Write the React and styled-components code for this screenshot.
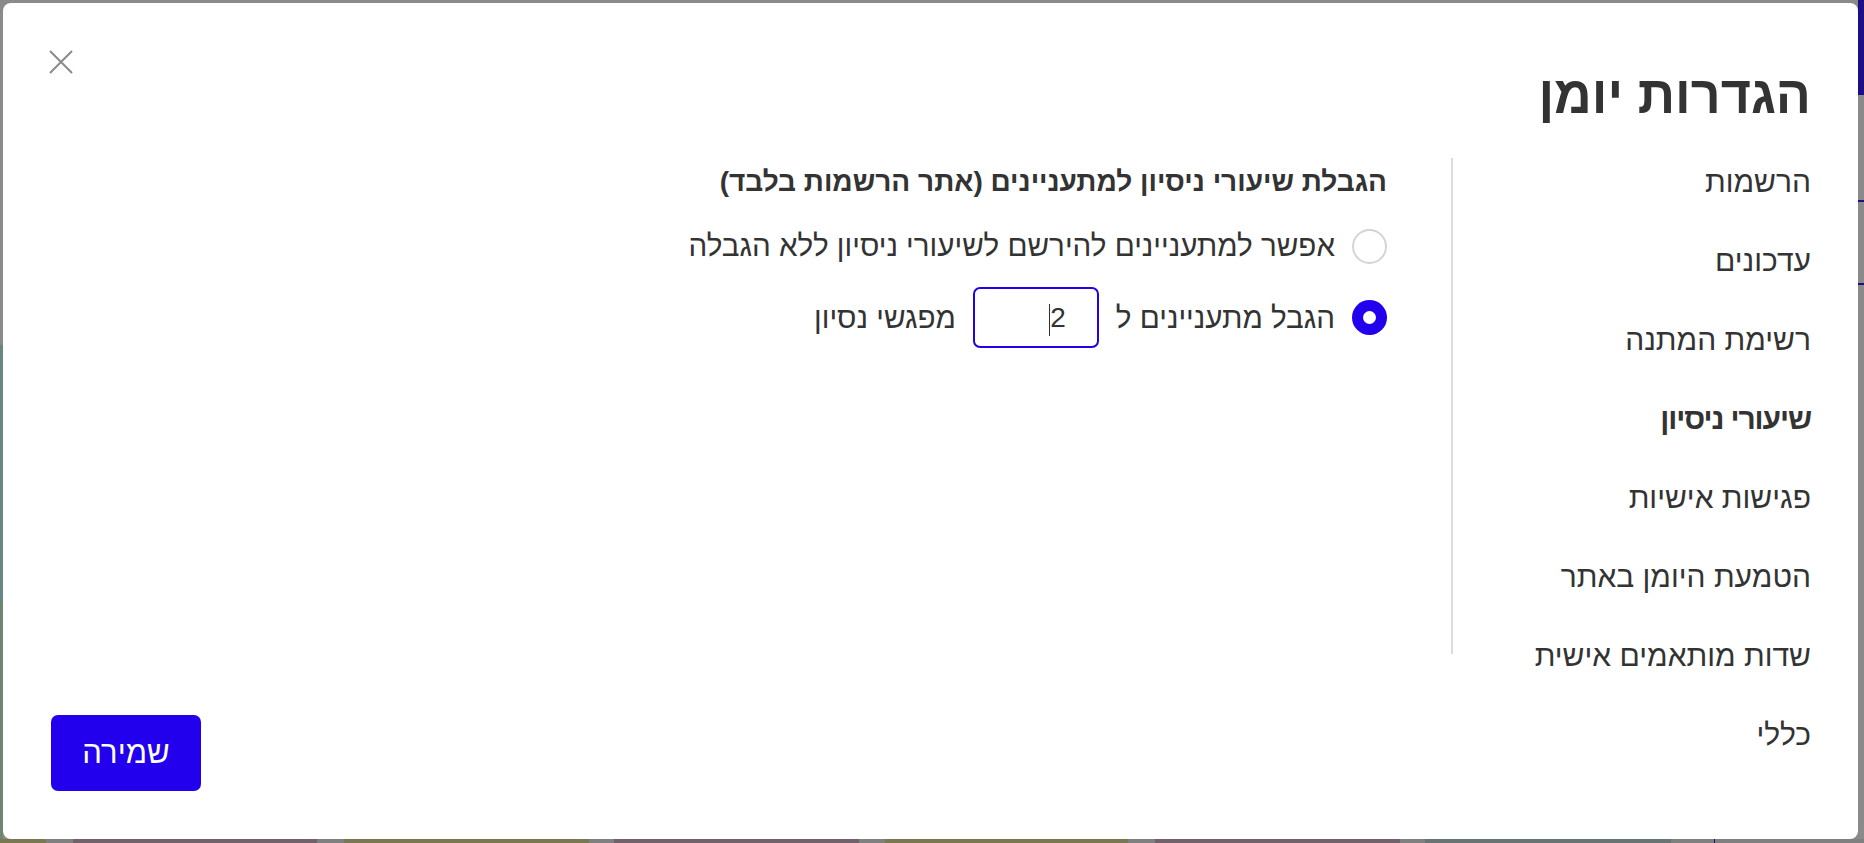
import React from "react";
import styled, { createGlobalStyle } from "styled-components";

const Global = createGlobalStyle`
  html, body { margin: 0; padding: 0; height: 100%; }
  body {
    background: #8a8a8a;
    font-family: "Liberation Sans", "DejaVu Sans", sans-serif;
    overflow: hidden;
  }
`;

const Page = styled.div`
  height: 843px;
  display: grid;
  grid-template-rows: 1fr 4px;
  background: #8a8a8a;
`;

const PageMain = styled.div`
  display: flex;
  min-height: 0;
`;

const EdgeColumn = styled.div`
  width: ${(p) => p.$w}px;
  display: flex;
  flex-direction: column;
`;

const Filler = styled.div`
  flex: 1;
`;

const Segment = styled.div`
  flex: 0 0 ${(p) => p.$size}px;
  background: ${(p) => p.$color};
`;

const BottomStrip = styled.div`
  display: flex;
`;

const Overlay = styled.div`
  position: fixed;
  inset: 0;
`;

const Modal = styled.div`
  position: absolute;
  top: 3px;
  left: 3px;
  width: 1855px;
  height: 836px;
  box-sizing: border-box;
  background: #fff;
  border-radius: 8px;
  padding: 68px 47px 48px 48px;
  display: flex;
  flex-direction: column;
  direction: rtl;
  color: #333;
`;

const CloseButton = styled.button`
  position: absolute;
  top: 46px;
  left: 45px;
  width: 26px;
  height: 26px;
  padding: 0;
  border: 0;
  background: transparent;
  cursor: pointer;
  display: flex;
  align-items: center;
  justify-content: center;
`;

const Title = styled.h1`
  margin: 0;
  font-size: 52px;
  line-height: 48px;
  font-weight: 700;
  color: #333;
`;

const Body = styled.div`
  display: flex;
  margin-top: 23px;
  flex: 1;
  min-height: 0;
`;

const Nav = styled.nav`
  width: 358px;
  display: flex;
  flex-direction: column;
`;

const NavItem = styled.div`
  height: 79px;
  line-height: 79px;
  font-size: 30px;
  font-weight: ${(p) => (p.$active ? 700 : 400)};
  letter-spacing: ${(p) => (p.$active ? "-1.1px" : "0")};
  color: #333;
  cursor: pointer;
  white-space: nowrap;
`;

const Content = styled.section`
  align-self: flex-start;
  margin-top: 16px;
  height: 496px;
  border-right: 2px solid #dcdcdc;
  padding-right: 64px;
  display: flex;
  flex-direction: column;
`;

const SectionHeading = styled.h2`
  margin: 0;
  font-size: 28px;
  line-height: 48px;
  font-weight: 700;
  color: #333;
  white-space: nowrap;
`;

const Options = styled.div`
  margin-top: 16px;
  display: flex;
  flex-direction: column;
  gap: 17px;
`;

const OptionRow = styled.label`
  display: flex;
  align-items: center;
  gap: 17px;
  min-height: 48px;
  font-size: 29.6px;
  color: #333;
  cursor: pointer;
  white-space: nowrap;
`;

const Radio = styled.span`
  flex: 0 0 auto;
  width: 35px;
  height: 35px;
  box-sizing: border-box;
  border-radius: 50%;
  border: ${(p) => (p.$checked ? "none" : "2px solid #d4d4d4")};
  background: ${(p) => (p.$checked ? "#2200ee" : "#fff")};
  display: flex;
  align-items: center;
  justify-content: center;
  &::after {
    content: "";
    display: ${(p) => (p.$checked ? "block" : "none")};
    width: 13px;
    height: 13px;
    border-radius: 50%;
    background: #fff;
  }
`;

const NumberBox = styled.div`
  width: 126px;
  height: 61px;
  flex: 0 0 auto;
  box-sizing: border-box;
  border: 2px solid #2200ee;
  border-radius: 7px;
  display: flex;
  align-items: center;
  padding-right: 31px;
  font-size: 28px;
  color: #333;
`;

const Caret = styled.span`
  width: 1px;
  height: 32px;
  margin-top: 4px;
  background: #333;
  margin-left: 1px;
`;

const Footer = styled.div`
  margin-top: auto;
  display: flex;
  justify-content: flex-end;
`;

const SaveButton = styled.button`
  width: 150px;
  height: 76px;
  border: 0;
  border-radius: 7px;
  background: #2200ee;
  color: #fff;
  font-family: inherit;
  font-size: 31px;
  cursor: pointer;
`;

const navItems = [
  "הרשמות",
  "עדכונים",
  "רשימת המתנה",
  "שיעורי ניסיון",
  "פגישות אישיות",
  "הטמעת היומן באתר",
  "שדות מותאמים אישית",
  "כללי",
];

const leftEdge = [
  { size: 345, color: "#8a8a8a" },
  { size: 255, color: "#678783" },
  { size: 240, color: "#6c8670" },
];

const rightEdge = [
  { size: 95, color: "#1c0f86" },
  { size: 105, color: "#8a8a8a" },
  { size: 2, color: "#1c0f86" },
  { size: 81, color: "#8a8a8a" },
  { size: 2, color: "#1c0f86" },
  { size: 554, color: "#8a8a8a" },
];

const bottom = [
  { size: 46, color: "#7b7851" },
  { size: 27, color: "#808080" },
  { size: 244, color: "#74606b" },
  { size: 27, color: "#808080" },
  { size: 245, color: "#7b7851" },
  { size: 25, color: "#808080" },
  { size: 245, color: "#74606b" },
  { size: 26, color: "#808080" },
  { size: 243, color: "#7b7851" },
  { size: 27, color: "#808080" },
  { size: 245, color: "#74606b" },
  { size: 25, color: "#808080" },
  { size: 246, color: "#687373" },
  { size: 43, color: "#808080" },
  { size: 1, color: "#1c0f86" },
  { size: 150, color: "#808080" },
];

export default function App() {
  return (
    <>
      <Global />
      <Page>
        <PageMain>
          <EdgeColumn $w={3}>
            {leftEdge.map((s, i) => (
              <Segment key={i} $size={s.size} $color={s.color} />
            ))}
          </EdgeColumn>
          <Filler />
          <EdgeColumn $w={7}>
            {rightEdge.map((s, i) => (
              <Segment key={i} $size={s.size} $color={s.color} />
            ))}
          </EdgeColumn>
        </PageMain>
        <BottomStrip>
          {bottom.map((s, i) => (
            <Segment key={i} $size={s.size} $color={s.color} />
          ))}
        </BottomStrip>
      </Page>
      <Overlay>
        <Modal>
          <CloseButton aria-label="סגירה">
            <svg width="26" height="26" viewBox="0 0 26 26">
              <path d="M2 2 L24 24 M24 2 L2 24" stroke="#8a8a8a" strokeWidth="2" fill="none" />
            </svg>
          </CloseButton>
          <Title>הגדרות יומן</Title>
          <Body>
            <Nav>
              {navItems.map((t) => (
                <NavItem key={t} $active={t === "שיעורי ניסיון"}>
                  {t}
                </NavItem>
              ))}
            </Nav>
            <Content>
              <SectionHeading>הגבלת שיעורי ניסיון למתעניינים (אתר הרשמות בלבד)</SectionHeading>
              <Options>
                <OptionRow>
                  <Radio />
                  <span>אפשר למתעניינים להירשם לשיעורי ניסיון ללא הגבלה</span>
                </OptionRow>
                <OptionRow>
                  <Radio $checked />
                  <span>הגבל מתעניינים ל</span>
                  <NumberBox>
                    <span>2</span>
                    <Caret />
                  </NumberBox>
                  <span>מפגשי נסיון</span>
                </OptionRow>
              </Options>
            </Content>
          </Body>
          <Footer>
            <SaveButton>שמירה</SaveButton>
          </Footer>
        </Modal>
      </Overlay>
    </>
  );
}
